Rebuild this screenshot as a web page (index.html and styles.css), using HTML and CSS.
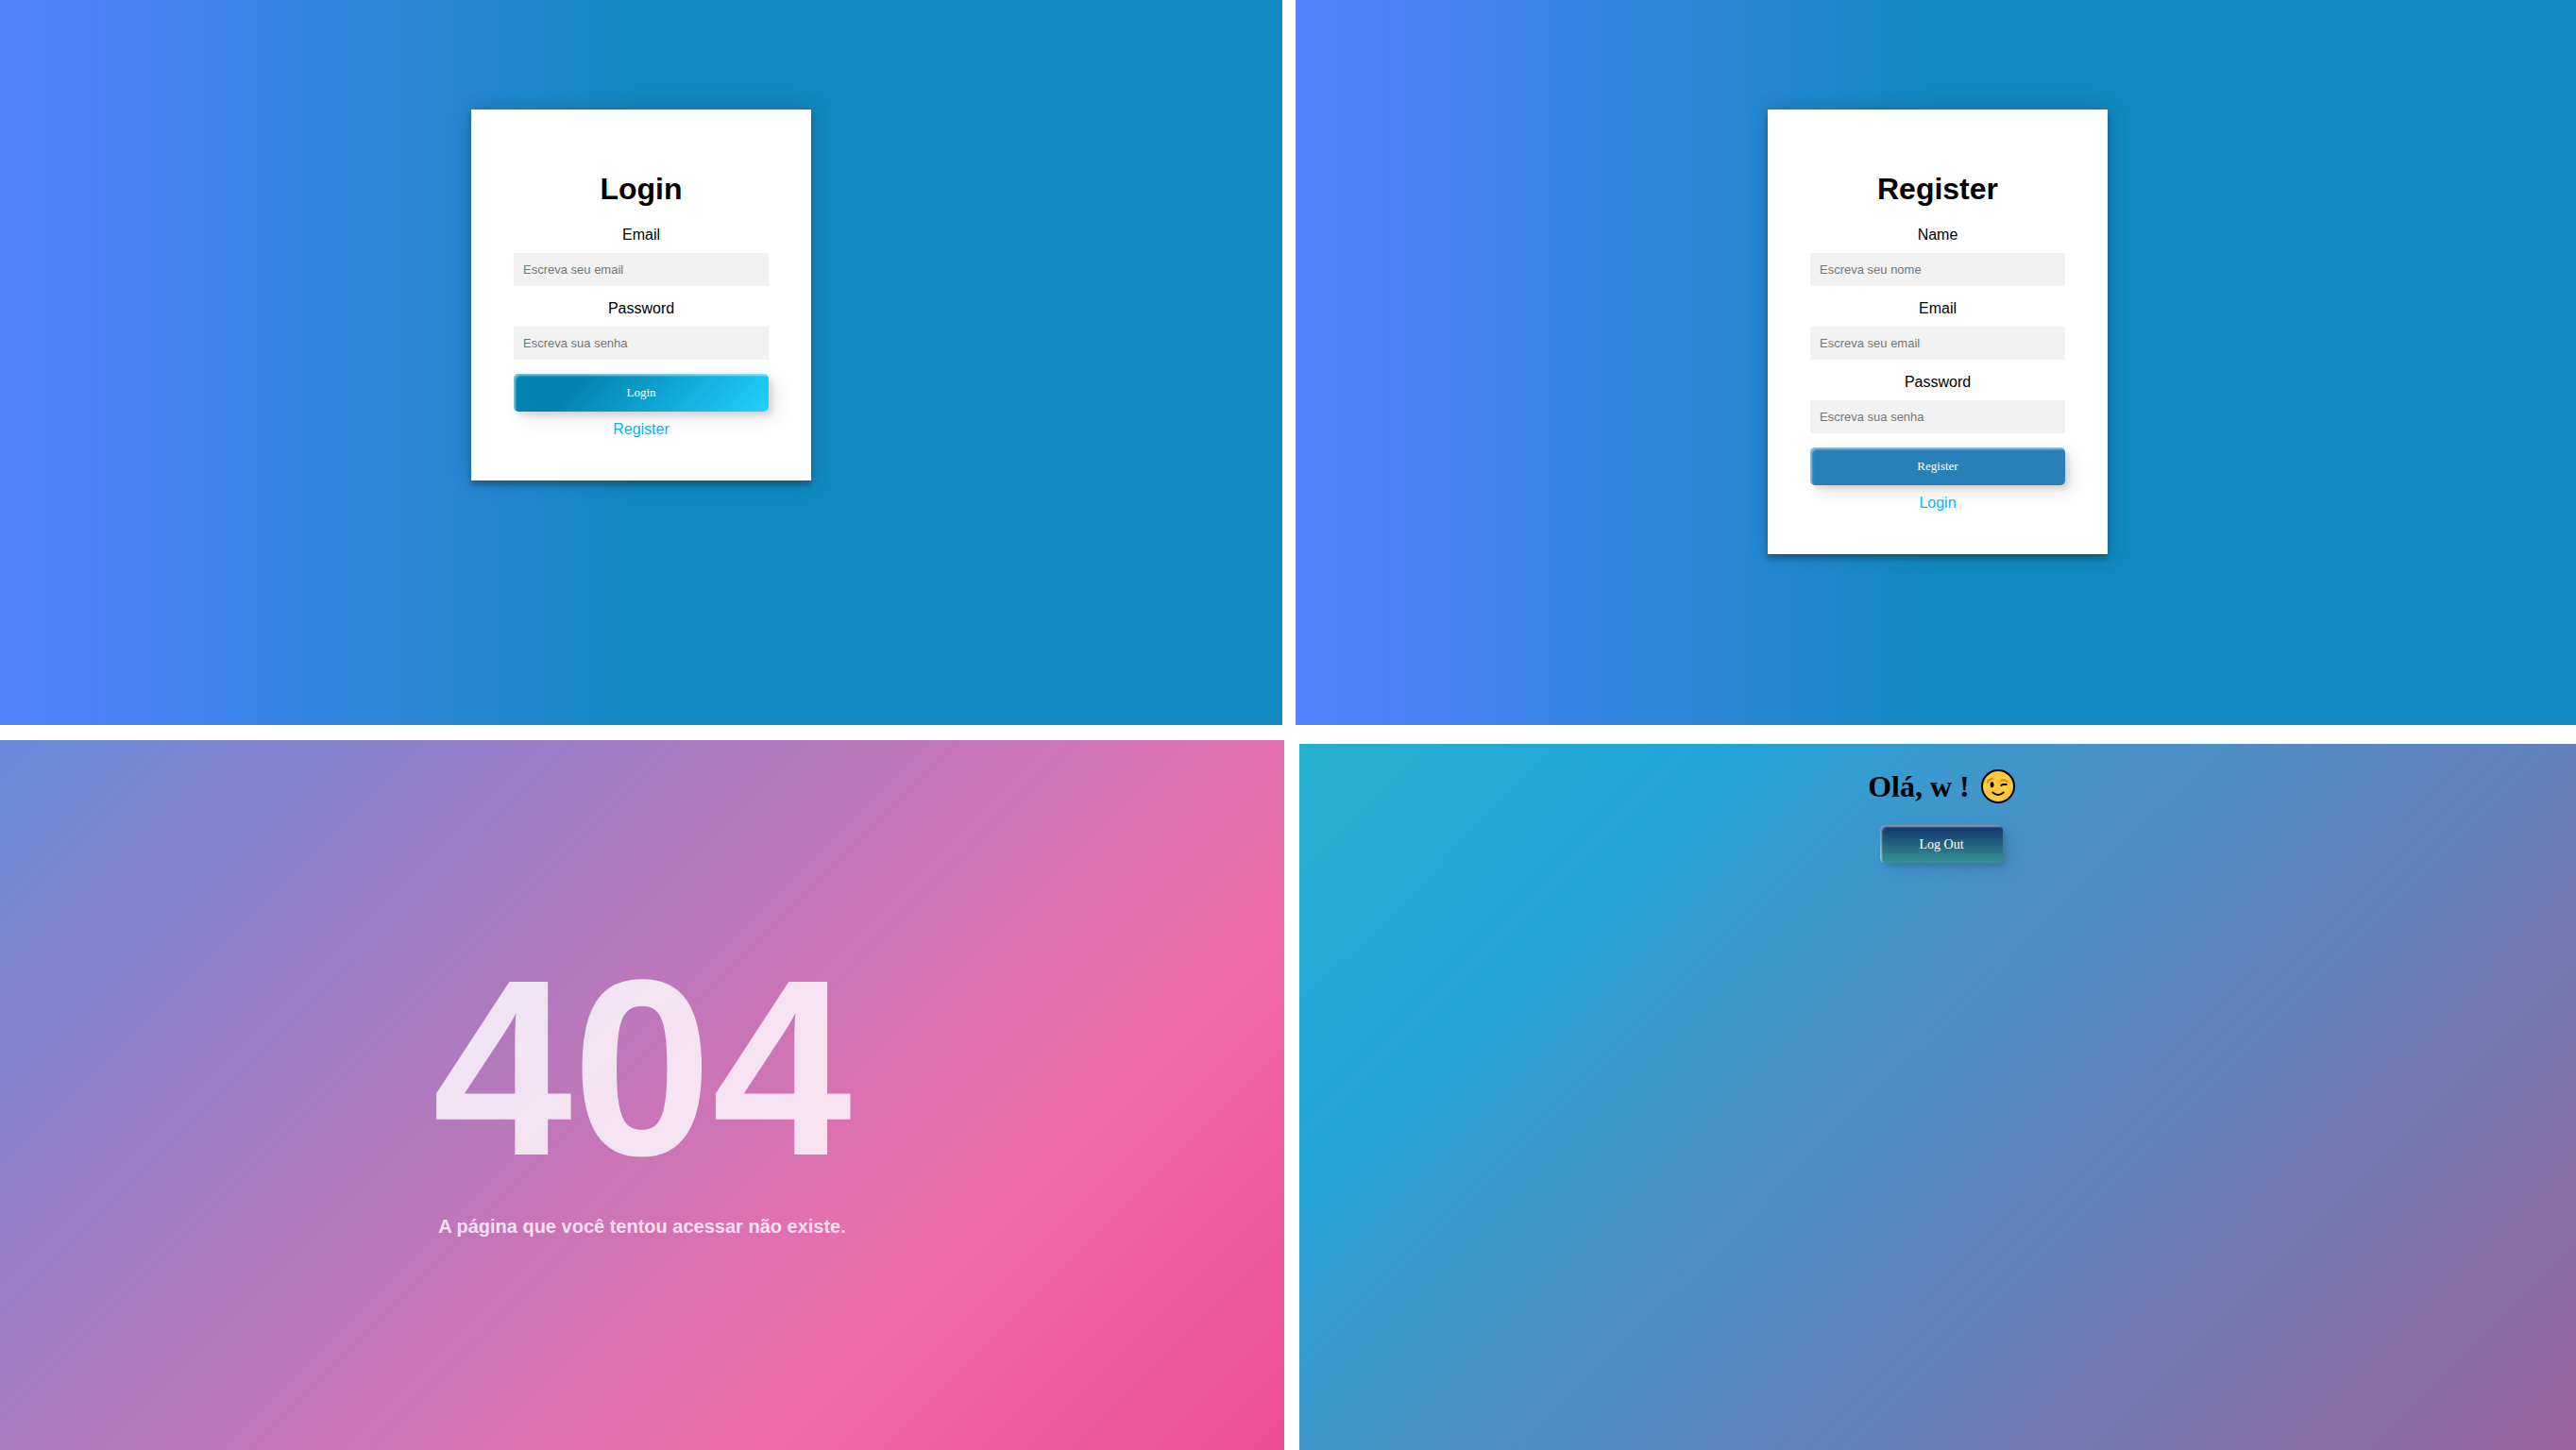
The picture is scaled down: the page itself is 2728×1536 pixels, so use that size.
FILE: index.html
```html
<!DOCTYPE html>
<html lang="pt-BR">
<head>
<meta charset="utf-8">
<meta name="viewport" content="width=device-width, initial-scale=1">
<title>Login</title>
<link rel="stylesheet" href="styles.css">
</head>
<body>
<main class="board">
  <div class="row row-forms">
    <section class="screen screen-form" id="login">
      <form class="card">
        <h1 class="card-title">Login</h1>
        <label class="label" for="login-email">Email</label>
        <input class="field" id="login-email" type="email" placeholder="Escreva seu email">
        <label class="label" for="login-password">Password</label>
        <input class="field" id="login-password" type="password" placeholder="Escreva sua senha">
        <button class="button button-login" type="submit">Login</button>
        <a class="link" href="#register">Register</a>
      </form>
    </section>
    <section class="screen screen-form" id="register">
      <form class="card">
        <h1 class="card-title">Register</h1>
        <label class="label" for="register-name">Name</label>
        <input class="field" id="register-name" type="text" placeholder="Escreva seu nome">
        <label class="label" for="register-email">Email</label>
        <input class="field" id="register-email" type="email" placeholder="Escreva seu email">
        <label class="label" for="register-password">Password</label>
        <input class="field" id="register-password" type="password" placeholder="Escreva sua senha">
        <button class="button button-register" type="submit">Register</button>
        <a class="link" href="#login">Login</a>
      </form>
    </section>
  </div>
  <div class="row row-pages">
    <section class="screen screen-missing">
      <h1 class="code">404</h1>
      <p class="message">A página que você tentou acessar não existe.</p>
    </section>
    <section class="screen screen-home">
      <h1 class="greeting">Olá, w !
        <svg class="wink" viewBox="0 0 36 36" aria-hidden="true">
          <circle cx="18" cy="18" r="17" fill="#ffc83d" stroke="#000" stroke-width="2"/>
          <g fill="none" stroke-linecap="round">
            <path d="M6.800 13.500Q8 10 12.500 10M21 12Q24 10 27.500 12.800" stroke="#d68f00" stroke-width="1.900"/>
            <path d="M12.300 24.500Q18 29.500 23.700 24.500M21.300 17.200Q22 15.800 24 16H26.800" stroke="#000" stroke-width="1.900"/>
          </g>
          <ellipse cx="11.600" cy="16.300" rx="1.900" ry="3"/>
        </svg>
      </h1>
      <button class="button button-logout" type="button">Log Out</button>
    </section>
  </div>
</main>
</body>
</html>
```
FILE: styles.css
```css
* {
  box-sizing: border-box;
}

body {
  margin: 0;
  background: #fff;
  font-family: "Liberation Sans", Arial, sans-serif;
}

.board {
  display: flex;
  flex-direction: column;
  gap: 16px;
  min-height: 100vh;
}

.row {
  display: grid;
}

.row-forms {
  grid-template-columns: 1358fr 1356fr;
  gap: 14px;
  min-height: 50vh;
}

.row-pages {
  flex: 1;
  grid-template-columns: 1360fr 1352fr;
  gap: 16px;
}

.screen {
  display: flex;
  flex-direction: column;
  align-items: center;
}

.screen-form {
  padding: 116px 16px 40px;
  background: linear-gradient(90deg, #5482ff 0%, #3186df 27%, #1289c1 50%);
}

.card {
  display: flex;
  flex-direction: column;
  width: 100%;
  max-width: 360px;
  padding: 45px;
  background: #fff;
  box-shadow: 0 0 20px rgba(0, 0, 0, 0.2), 0 5px 5px rgba(0, 0, 0, 0.24);
  text-align: center;
}

#register {
  padding-left: 20px;
}

.card-title {
  margin: 21px 0;
  font-size: 32px;
  line-height: 37px;
}

.label {
  margin-bottom: 10px;
  font-size: 16px;
  line-height: 18px;
}

.field {
  height: 35px;
  margin: 0 0 15px;
  padding: 10px;
  border: 0;
  background: #f2f2f2;
  font-family: inherit;
  font-size: 13px;
}

.field::placeholder {
  color: #757575;
}

.button {
  height: 40px;
  padding: 10px 25px;
  border: 0;
  border-radius: 5px;
  color: #fff;
  font-family: "Liberation Serif", "Times New Roman", serif;
  font-size: 13px;
  box-shadow: inset 2px 2px 2px rgba(255, 255, 255, 0.5), 7px 7px 20px rgba(0, 0, 0, 0.1), 4px 4px 5px rgba(0, 0, 0, 0.1);
  cursor: pointer;
}

.button-login {
  background: linear-gradient(135deg, #0083b0 25%, #20d2ff 100%);
}

.button-register {
  background: #2980b9;
}

.button-logout {
  width: 130px;
  padding-top: 12px;
  background: linear-gradient(#10316b, #349494);
  font-size: 14px;
}

.link {
  margin-top: 10px;
  color: #00b7ff;
  font-size: 16px;
  line-height: 18px;
  text-decoration: none;
}

.screen-missing {
  justify-content: center;
  padding-bottom: 34px;
  background: linear-gradient(135deg, #6589d8 0%, #ee6dab 71%, #f04c91 100%);
  color: rgba(255, 255, 255, 0.8);
}

.code {
  margin: 0;
  font-size: 266px;
  line-height: 312px;
}

.message {
  margin: 0;
  font-size: 20px;
  font-weight: bold;
  line-height: 24px;
}

.screen-home {
  margin-top: 4px;
  padding: 27px 0 0 8px;
  background: linear-gradient(135deg, #24b0d0 0%, #21a6d8 21%, #3d97cc 35%, #6680b9 65%, #9b639d 100%);
}

.greeting {
  display: flex;
  align-items: center;
  gap: 12px;
  margin: 0 0 23px;
  font-family: "Liberation Serif", "Times New Roman", serif;
  font-size: 32px;
  line-height: 36px;
}

.wink {
  width: 36px;
  height: 36px;
}
```
